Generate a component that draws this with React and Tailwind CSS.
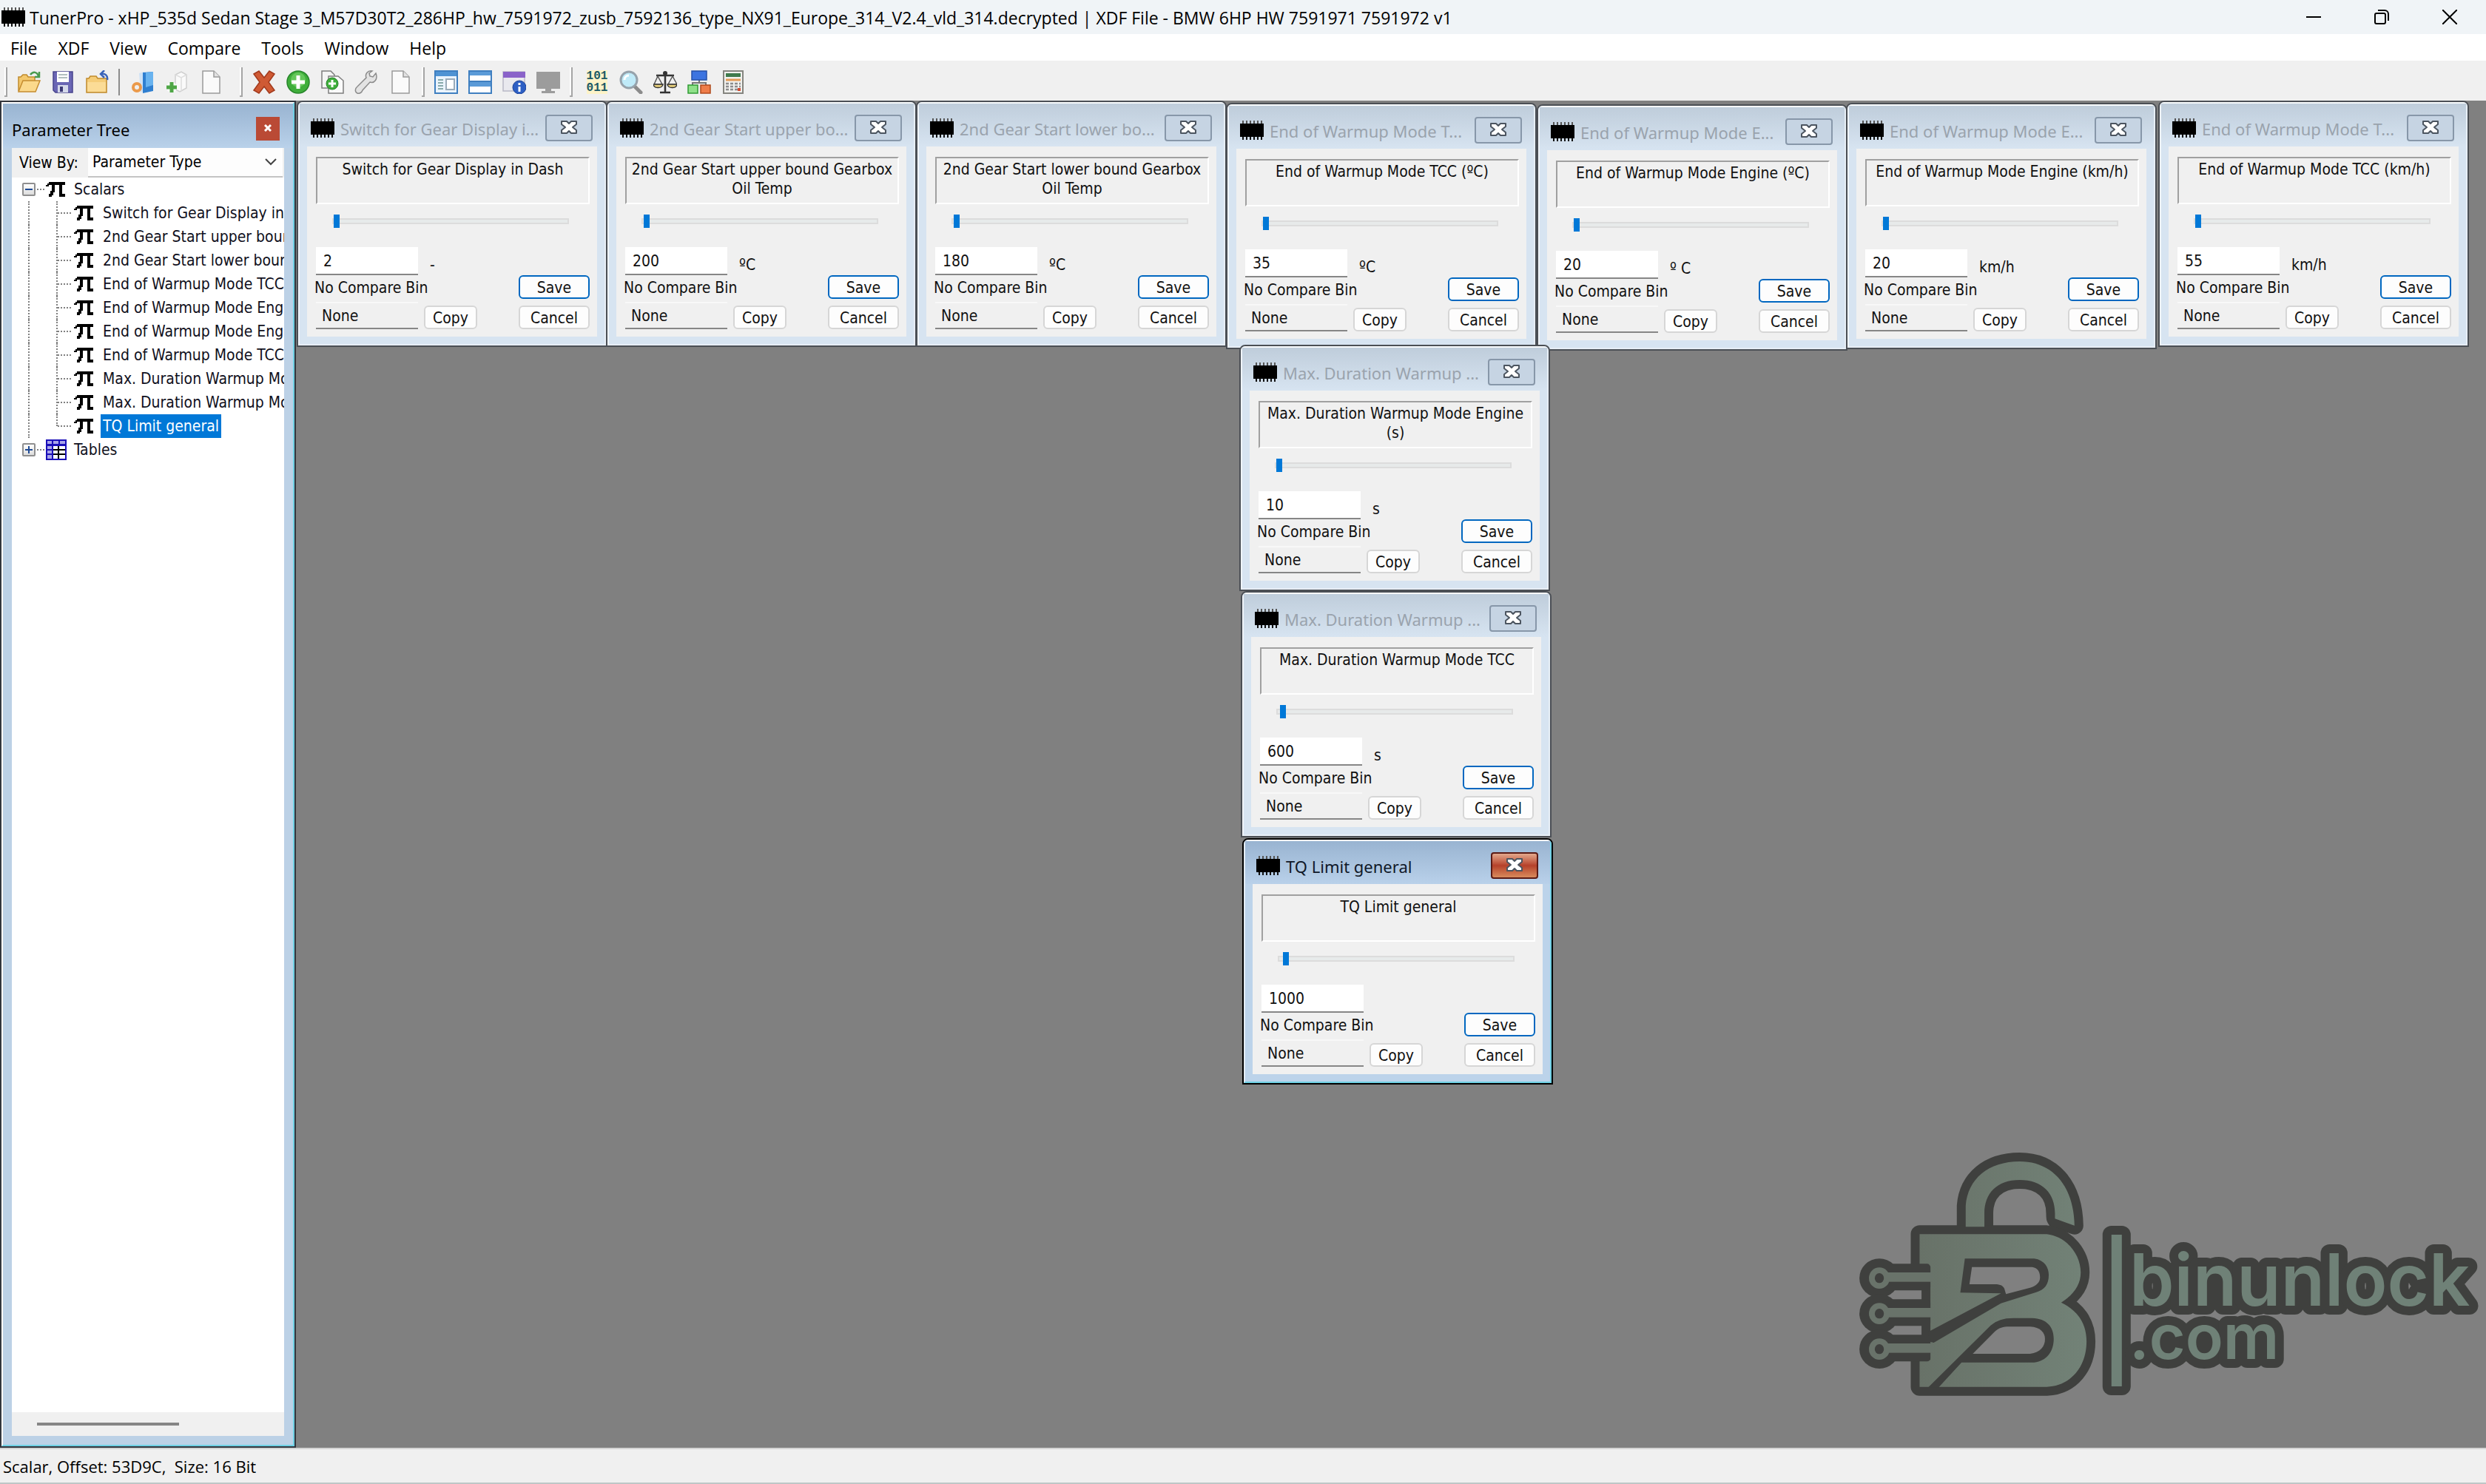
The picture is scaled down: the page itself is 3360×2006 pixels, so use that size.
import React from "react";

const SCALARS = [
  "Switch for Gear Display in Dash",
  "2nd Gear Start upper bound Gearbox Oil Temp",
  "2nd Gear Start lower bound Gearbox Oil Temp",
  "End of Warmup Mode TCC (ºC)",
  "End of Warmup Mode Engine (ºC)",
  "End of Warmup Mode Engine (km/h)",
  "End of Warmup Mode TCC (km/h)",
  "Max. Duration Warmup Mode Engine (s)",
  "Max. Duration Warmup Mode TCC",
  "TQ Limit general",
];

const WINDOWS = [
  { id: "w1", x: 1, y: 0, title: "Switch for Gear Display i...", name: SCALARS[0], value: 2, unit: "-" },
  { id: "w2", x: 419, y: 0, title: "2nd Gear Start upper bo...", name: SCALARS[1], value: 200, unit: "ºC" },
  { id: "w3", x: 838, y: 0, title: "2nd Gear Start lower bo...", name: SCALARS[2], value: 180, unit: "ºC" },
  { id: "w4", x: 1257, y: 3, title: "End of Warmup Mode T...", name: SCALARS[3], value: 35, unit: "ºC" },
  { id: "w5", x: 1677, y: 5, title: "End of Warmup Mode E...", name: SCALARS[4], value: 20, unit: "º C" },
  { id: "w6", x: 2095, y: 3, title: "End of Warmup Mode E...", name: SCALARS[5], value: 20, unit: "km/h" },
  { id: "w7", x: 2517, y: 0, title: "End of Warmup Mode T...", name: SCALARS[6], value: 55, unit: "km/h" },
  { id: "w8", x: 1275, y: 330, title: "Max. Duration Warmup ...", name: SCALARS[7], value: 10, unit: "s" },
  { id: "w9", x: 1277, y: 663, title: "Max. Duration Warmup ...", name: SCALARS[8], value: 600, unit: "s" },
  { id: "w10", x: 1279, y: 997, title: "TQ Limit general", name: SCALARS[9], value: 1000, unit: "", active: true },
];

const MENUS = ["File", "XDF", "View", "Compare", "Tools", "Window", "Help"];

function Chip() {
  return (
    <svg viewBox="0 0 32 26" className="h-[26px] w-8 shrink-0" aria-hidden="true">
      <path d="M4 0v5M9 0v5M14 0v5M19 0v5M24 0v5M29 0v5" stroke="#555" strokeWidth="2" />
      <path d="M4 21v5M9 21v5M14 21v5M19 21v5M24 21v5M29 21v5" stroke="#111" strokeWidth="2" />
      <rect x="0" y="4" width="32" height="18" fill="#000" />
    </svg>
  );
}

function PiIcon() {
  return (
    <svg viewBox="0 0 26 24" className="h-6 w-[26px] shrink-0" aria-hidden="true">
      <path d="M0 6h2V4h2V2h22v4h-4v12h4v4h-8V6h-6v10h-2v4h-2v2H4v-4h2v-4h2V6H4v2H0z" fill="#000" />
    </svg>
  );
}

function TableIcon() {
  return (
    <svg viewBox="0 0 28 28" className="h-7 w-7 shrink-0" aria-hidden="true">
      <rect width="28" height="28" fill="#1a0fb8" />
      <path d="M2 2h6v4H2zM10 2h7v4h-7zM19 2h7v4h-7zM2 9h6v4H2zM2 15h6v4H2zM2 21h6v5H2z" fill="#a9a4ea" />
      <path d="M10 9h16v17H10z" fill="#fff" />
      <path d="M17 9v17M10 14h16M10 20h16" stroke="#000" strokeWidth="2" />
    </svg>
  );
}

function XGlyph() {
  return (
    <svg viewBox="0 0 24 20" className="h-5 w-6" aria-hidden="true">
      <path
        d="M2 2h7l3 3 3-3h7v4l-5 4 5 4v4h-7l-3-3-3 3H2v-4l5-4-5-4z"
        fill="#fff"
        stroke="#4c5560"
        strokeWidth="2"
        strokeLinejoin="round"
      />
    </svg>
  );
}

const ICONS = {
  open: (
    <>
      <path d="M2 28V9h3l3-3h5l2 3h9v5" fill="#f3c86d" stroke="#c08a2c" strokeWidth="1.5" />
      <path d="M2 29l6-15h23l-6 15z" fill="#fbd98c" stroke="#c58c2f" strokeWidth="1.5" />
      <path d="M18 6c4-5 9-4 11 2M30 2v7h-6" fill="none" stroke="#4a9a4e" strokeWidth="2.5" />
    </>
  ),
  save: (
    <>
      <path d="M3 2h26v28H6l-3-3z" fill="#6a66b4" stroke="#47438c" strokeWidth="1.5" />
      <path d="M8 2h16v14H8z" fill="#fff" />
      <path d="M10 6h12M10 10h12" stroke="#9aa" strokeWidth="1.5" />
      <path d="M9 20h14v10H9z" fill="#d5d9ea" />
      <path d="M12 22h4v7h-4z" fill="#3b3974" />
    </>
  ),
  folderBack: (
    <>
      <path d="M2 30V11h3l2-3h8l2 3h12v19z" fill="#f5cd78" stroke="#c08a2c" strokeWidth="1.5" />
      <path d="M3 16h25v13H3z" fill="#fbdc96" />
      <path d="M30 13c1-6-3-9-8-8M26 0l-5 5 5 5" fill="none" stroke="#3a63b8" strokeWidth="2.5" />
    </>
  ),
  bin: (
    <>
      <path d="M11 4l7-2v26l-5 2z" fill="#cfe2f6" />
      <path d="M16 3l14-1v26l-14 3z" fill="#2f7fd0" />
      <path d="M20 3l10-1v18l-10 3z" fill="#69b3ef" />
      <circle cx="8" cy="23" r="5" fill="none" stroke="#eb9a4b" strokeWidth="4" />
    </>
  ),
  binAdd: (
    <>
      <path d="M14 6l8-4 7 4v18l-9 5-6-3z" fill="#fafafa" stroke="#cfcfcf" strokeWidth="1.5" />
      <path d="M14 6l8 4 7-4M22 10v18" fill="none" stroke="#dedede" strokeWidth="1.5" />
      <circle cx="9" cy="23" r="7" fill="#fff" />
      <path d="M9 16v14M2 23h14" stroke="#4fa646" strokeWidth="5" />
    </>
  ),
  page: (
    <>
      <path d="M5 1h15l8 8v22H5z" fill="#fafafa" stroke="#9a9a9a" strokeWidth="1.5" />
      <path d="M20 1v8h8" fill="#e2e2e2" stroke="#9a9a9a" strokeWidth="1.5" />
    </>
  ),
  cross: (
    <path d="M2 5l7-4 7 9 7-9 7 4-8 11 8 11-7 4-7-9-7 9-7-4 8-11z" fill="#cf5a34" stroke="#a23a1d" strokeWidth="1.5" />
  ),
  add: (
    <>
      <circle cx="16" cy="16" r="15" fill="#3fae3b" stroke="#27852a" strokeWidth="1.5" />
      <circle cx="16" cy="13" r="10" fill="#64c75a" />
      <path d="M16 7v18M7 16h18" stroke="#fff" strokeWidth="5" />
    </>
  ),
  copyAdd: (
    <>
      <path d="M2 1h12l5 5v18H2z" fill="#f4f4f4" stroke="#7d7d7d" strokeWidth="1.5" />
      <path d="M11 8h13l7 6v17H11z" fill="#fafafa" stroke="#7d7d7d" strokeWidth="1.5" />
      <circle cx="16" cy="18" r="8" fill="#3fae3b" stroke="#27852a" />
      <path d="M16 13v10M11 18h10" stroke="#fff" strokeWidth="3" />
    </>
  ),
  wrench: (
    <path
      d="M29 4l-4 5-4-1-1-4 4-3c-6-1-10 4-8 9L4 22c-4 3-3 8 0 9s6-1 7-4l10-11c6 2 11-4 8-12z"
      fill="#e3e3e3"
      stroke="#8b8b8b"
      strokeWidth="1.5"
    />
  ),
  layout: (
    <>
      <rect x="1" y="1" width="30" height="30" fill="#eaf3fc" stroke="#3f7fc0" strokeWidth="2" />
      <path d="M2 2h28v6H2z" fill="#4f93d3" />
      <path d="M5 13h7M5 17h7M5 21h7M5 25h7" stroke="#8aa" strokeWidth="2" />
      <rect x="16" y="12" width="11" height="14" fill="#fff" stroke="#9aabb9" strokeWidth="2" />
    </>
  ),
  tile: (
    <>
      <rect x="1" y="1" width="30" height="30" fill="#fff" stroke="#3f7fc0" strokeWidth="2" />
      <path d="M2 2h28v5H2zM2 16h28v6H2z" fill="#5b9bd8" />
      <path d="M2 15h28" stroke="#3f7fc0" strokeWidth="2" />
    </>
  ),
  info: (
    <>
      <rect x="1" y="2" width="29" height="26" fill="#e9e9ee" stroke="#b9b9c6" strokeWidth="1.5" />
      <path d="M1 2h30v8H1z" fill="#8a63c9" />
      <circle cx="23" cy="23" r="9" fill="#2d5fc4" stroke="#1c4296" />
      <path d="M23 17v3M23 22v7" stroke="#fff" strokeWidth="3" />
    </>
  ),
  monitor: <path d="M0 2h32v23H20v3h5v3H7v-3h5v-3H0z" fill="#9c9c9c" />,
  zoom: (
    <>
      <path d="M20 21l9 9" stroke="#8b8b8b" strokeWidth="5" strokeLinecap="round" />
      <circle cx="13" cy="13" r="11" fill="#bfeaf8" stroke="#96a2ab" strokeWidth="3" />
      <path d="M7 13c0-4 3-6 6-6" fill="none" stroke="#fff" strokeWidth="3" />
    </>
  ),
  scales: (
    <>
      <path d="M16 3v26M9 30h14M4 7h24" stroke="#333" strokeWidth="2.5" />
      <circle cx="16" cy="4" r="3" fill="#333" />
      <path d="M6 8L1 19h11zM26 8l-6 11h12z" fill="none" stroke="#555" strokeWidth="1.5" />
      <path d="M0 19h13c-1 6-12 6-13 0zM19 19h13c-1 6-12 6-13 0z" fill="#e6cf7c" stroke="#333" strokeWidth="1.5" />
    </>
  ),
  nodes: (
    <>
      <path d="M16 12v6M7 21v-4h18v4" fill="none" stroke="#777" strokeWidth="2" />
      <rect x="6" y="1" width="20" height="12" fill="#3c74e0" stroke="#2450a8" strokeWidth="1.5" />
      <rect x="1" y="20" width="13" height="11" fill="#8fe089" stroke="#2f9a33" strokeWidth="1.5" />
      <rect x="18" y="20" width="13" height="11" fill="#ef7d49" stroke="#b04a1c" strokeWidth="1.5" />
    </>
  ),
  calc: (
    <>
      <rect x="3" y="1" width="26" height="30" fill="#f1f1ee" stroke="#85857f" strokeWidth="2" />
      <rect x="6" y="4" width="20" height="5" fill="#3f7a4c" />
      <path d="M6 13h20" stroke="#e39a55" strokeWidth="3" />
      <path d="M6 18h20M6 22h20M6 26h20" stroke="#8d8d8d" strokeWidth="2.5" strokeDasharray="4 2" />
      <path d="M22 24h4v4h-4z" fill="#d24b32" />
    </>
  ),
};

function ToolButton({ icon, label }) {
  return (
    <button type="button" aria-label={label} className="flex h-10 w-[46px] items-center justify-center">
      {icon === "binary" ? (
        <span className="bg-[#fdf3c8] font-['Liberation_Mono'] text-base leading-4 font-bold text-[#1c5a66]">
          101
          <br />
          011
        </span>
      ) : (
        <svg viewBox="0 0 32 32" className="h-8 w-8" aria-hidden="true">
          {ICONS[icon]}
        </svg>
      )}
    </button>
  );
}

function Grip() {
  return <span className="mx-1.5 h-10 w-1 border-r-2 border-b-2 border-[#a5a5a5] bg-white" />;
}

function TitleBar() {
  const caption = "flex h-full w-[92px] items-center justify-center";
  return (
    <header className="flex h-[46px] items-center bg-[#f0f4f7] pr-[3px] pl-0.5">
      <Chip />
      <h1 className="ml-1.5 flex-1 truncate pt-0.5 font-['Open_Sans',sans-serif] text-[23px] whitespace-nowrap text-black">
        TunerPro - xHP_535d Sedan Stage 3_M57D30T2_286HP_hw_7591972_zusb_7592136_type_NX91_Europe_314_V2.4_vld_314.decrypted | XDF File - BMW 6HP HW 7591971 7591972 v1
      </h1>
      <button type="button" aria-label="Minimize" className={caption}>
        <svg viewBox="0 0 20 20" className="h-5 w-5"><path d="M0 10h20" stroke="#000" strokeWidth="2" /></svg>
      </button>
      <button type="button" aria-label="Restore" className={caption}>
        <svg viewBox="0 0 20 20" className="h-5 w-5" fill="none" stroke="#000" strokeWidth="2">
          <rect x="1" y="5" width="14" height="14" rx="2" />
          <path d="M5 1h9a5 5 0 0 1 5 5v9" />
        </svg>
      </button>
      <button type="button" aria-label="Close" className={caption}>
        <svg viewBox="0 0 20 20" className="h-5 w-5"><path d="M0 0l20 20M20 0L0 20" stroke="#000" strokeWidth="2" /></svg>
      </button>
    </header>
  );
}

function MenuBar() {
  return (
    <nav className="flex h-9 items-center bg-white">
      {MENUS.map((m) => (
        <button key={m} type="button" className="px-3.5 pt-0.5 font-['Open_Sans',sans-serif] text-[23px] leading-8 text-black">
          {m}
        </button>
      ))}
    </nav>
  );
}

function ToolBar() {
  return (
    <div role="toolbar" aria-label="Main toolbar" className="flex h-[54px] items-center bg-[#f0f0f0] pt-1">
      <Grip />
      <ToolButton icon="open" label="Open bin" />
      <ToolButton icon="save" label="Save bin" />
      <ToolButton icon="folderBack" label="Close bin" />
      <span className="mr-2 ml-1.5 h-9 w-0.5 bg-[#8c8c8c]" />
      <ToolButton icon="bin" label="Select definition" />
      <ToolButton icon="binAdd" label="Add definition" />
      <ToolButton icon="page" label="New definition" />
      <span className="w-2.5" />
      <Grip />
      <ToolButton icon="cross" label="Delete" />
      <ToolButton icon="add" label="Add" />
      <ToolButton icon="copyAdd" label="Duplicate" />
      <ToolButton icon="wrench" label="Edit" />
      <ToolButton icon="page" label="New" />
      <Grip />
      <ToolButton icon="layout" label="Parameter tree" />
      <ToolButton icon="tile" label="Tile" />
      <ToolButton icon="info" label="Window info" />
      <ToolButton icon="monitor" label="Emulator" />
      <Grip />
      <span className="w-1" />
      <ToolButton icon="binary" label="Hex editor" />
      <ToolButton icon="zoom" label="Find" />
      <ToolButton icon="scales" label="Compare" />
      <ToolButton icon="nodes" label="Difference" />
      <ToolButton icon="calc" label="Calculator" />
    </div>
  );
}

function Expander({ open, label }) {
  return (
    <button
      type="button"
      aria-label={label}
      className="flex h-[18px] w-[18px] shrink-0 items-center justify-center rounded-xs border-2 border-[#8f8f8f] bg-gradient-to-b from-white to-[#dcdcdc]"
    >
      <svg viewBox="0 0 10 10" className="h-2.5 w-2.5">
        <path d={open ? "M0 5h10" : "M0 5h10M5 0v10"} stroke="#1f4a94" strokeWidth="2" />
      </svg>
    </button>
  );
}

function ParameterTree() {
  return (
    <aside className="flex w-[400px] shrink-0 flex-col border-2 border-[#33363d] bg-[#bcd1e6]">
      <div className="flex flex-1 flex-col border-t-2 border-r-2 border-b-2 border-l-2 border-t-white border-r-[#6fd0e4] border-b-[#6fd0e4] border-l-white px-3 pb-3">
        <div className="-mx-3 flex h-[60px] items-center justify-between bg-gradient-to-b from-[#99b4d1] to-[#b9d1ea] pt-2 pr-[18px] pl-3">
          <h2 className="pt-0.5 font-['Noto_Sans',sans-serif] text-[22px] text-black">Parameter Tree</h2>
          <button
            type="button"
            aria-label="Close parameter tree"
            className="flex h-8 w-8 items-center justify-center bg-[#ba4a35] pb-0.5"
          >
            <svg viewBox="0 0 10 10" className="h-2.5 w-2.5"><path d="M1 1l8 8M9 1L1 9" stroke="#fff" strokeWidth="3" /></svg>
          </button>
        </div>
        <div className="flex h-10 bg-[#f0f0f0] pr-0.5">
          <label htmlFor="viewby" className="w-[103px] pl-2.5 text-[21px] leading-10">View By:</label>
          <div className="flex flex-1 items-center border-b-2 border-[#c4c4c4] bg-[#fdfdfd] pr-2">
            <select id="viewby" className="h-full flex-1 appearance-none pt-0.5 pl-1.5 text-[21px] outline-none">
              <option>Parameter Type</option>
            </select>
            <svg viewBox="0 0 16 10" className="h-2.5 w-4" aria-hidden="true">
              <path d="M1 1l7 7 7-7" fill="none" stroke="#444" strokeWidth="2" />
            </svg>
          </div>
        </div>
        <ul className="flex-1 overflow-hidden bg-white text-[21px] leading-8 whitespace-nowrap text-[#101020]">
          <li>
            <div className="flex h-8 items-center pl-3.5">
              <Expander open label="Collapse Scalars" />
              <span className="mx-0.5 w-2.5 border-t-2 border-dotted border-[#808080]" />
              <PiIcon />
              <span className="ml-2.5 px-0.5">Scalars</span>
            </div>
            <ul>
              {SCALARS.map((s, i) => {
                const last = i === SCALARS.length - 1;
                return (
                  <li key={s} className="flex h-8 items-center pl-[22px]">
                    <span className="h-8 w-[38px] shrink-0 border-l-2 border-dotted border-[#808080]" />
                    <span className={last ? "h-4 w-0 shrink-0 self-start border-l-2 border-dotted border-[#808080]" : "h-8 w-0 shrink-0 border-l-2 border-dotted border-[#808080]"} />
                    <span className="mr-1 w-[18px] shrink-0 border-t-2 border-dotted border-[#808080]" />
                    <PiIcon />
                    <span className={last ? "ml-2.5 bg-[#0078d7] px-[3px] text-white" : "ml-2.5 px-[3px]"}>{s}</span>
                  </li>
                );
              })}
            </ul>
          </li>
          <li className="flex h-8 items-center pl-3.5">
            <Expander label="Expand Tables" />
            <span className="mx-0.5 w-2.5 border-t-2 border-dotted border-[#808080]" />
            <TableIcon />
            <span className="ml-2 px-0.5">Tables</span>
          </li>
        </ul>
        <div className="flex h-8 items-center bg-[#f0f0f0] pl-[34px]">
          <span className="h-1 w-48 bg-[#868686]" />
        </div>
      </div>
    </aside>
  );
}

function ParamWindow({ id, x, y, title, name, value, unit, active }) {
  return (
    <section
      aria-label={name}
      style={{ left: x, top: y }}
      className={
        "absolute flex w-[420px] flex-col overflow-hidden rounded-t-lg border-2 " +
        (active ? "border-black bg-[#bcd3ea]" : "border-[#4b4f55] bg-[#d7e4f1]")
      }
    >
      <div
        className={
          "flex flex-col border-2 border-t-white/80 border-l-white/60 " +
          (active ? "border-r-[#6fd0e4] border-b-[#6fd0e4]" : "border-r-white/40 border-b-white/40")
        }
      >
        <div
          className={
            "flex h-[58px] items-center bg-gradient-to-b pt-2 pr-4 pl-[15px] " +
            (active ? "from-[#99b4d1] to-[#b9d1ea]" : "from-[#bfcddb] to-[#d7e4f1]")
          }
        >
          <Chip />
          <h2
            className={
              "ml-2 flex-1 pt-0.5 font-['Noto_Sans',sans-serif] text-[22px] whitespace-nowrap " +
              (active ? "text-[#101828]" : "text-[#9aa3ad]")
            }
          >
            {title}
          </h2>
          <button
            type="button"
            aria-label={"Close " + name}
            className={
              "flex h-9 w-16 shrink-0 items-center justify-center rounded-[4px] border-2 pb-0.5 " +
              (active
                ? "border-[#5b1a14] bg-gradient-to-b from-[#e3a88c] via-[#b5402a] to-[#d88a5c]"
                : "border-[#8797a9] bg-[#c6d4e3]")
            }
          >
            <XGlyph />
          </button>
        </div>
        <div className="mx-2.5 mb-2.5 bg-[#f0f0f0] pt-3.5 pr-2.5 pb-2.5 pl-3 text-[21px] text-[#101010]">
          <p className="h-16 border-2 border-t-[#a0a0a0] border-r-white border-b-white border-l-[#a0a0a0] px-0.5 pt-0.5 text-center leading-[26px]">
            {name}
          </p>
          <input
            type="range"
            aria-label={name}
            min="0"
            max="65535"
            defaultValue={value}
            className="mt-3.5 mr-6 mb-[26px] ml-[22px] block h-[18px] w-80 appearance-none bg-transparent [&::-webkit-slider-runnable-track]:h-2 [&::-webkit-slider-runnable-track]:border-2 [&::-webkit-slider-runnable-track]:border-[#dcdcdc] [&::-webkit-slider-runnable-track]:bg-[#e7eaea] [&::-webkit-slider-thumb]:-mt-[7px] [&::-webkit-slider-thumb]:h-[18px] [&::-webkit-slider-thumb]:w-2 [&::-webkit-slider-thumb]:appearance-none [&::-webkit-slider-thumb]:bg-[#0078d7]"
          />
          <div className="flex h-[38px] items-end">
            <input
              id={id}
              aria-label={name + " value"}
              defaultValue={value}
              className="h-full w-[138px] border-b-2 border-[#868686] bg-white pt-0.5 pl-2.5 outline-none"
            />
            <span className="ml-4 leading-7">{unit}</span>
          </div>
          <div className="flex h-8 items-center justify-between">
            <label htmlFor={id + "c"} className="-ml-0.5 pt-0.5 leading-8">No Compare Bin</label>
            <button type="button" className="h-8 w-24 rounded-md border-2 border-[#0067c0] bg-[#fdfdfd] pt-0.5 leading-6">
              Save
            </button>
          </div>
          <div className="mt-1 flex h-[37px] items-end">
            <input
              id={id + "c"}
              readOnly
              defaultValue="None"
              className="h-full w-[138px] border-t-2 border-b-2 border-t-[#f8f8f8] border-b-[#868686] pl-2 outline-none"
            />
            <button type="button" className="ml-2 h-8 w-[72px] rounded-md border-2 border-[#d6d6d6] bg-[#fdfdfd] pt-0.5 leading-6">
              Copy
            </button>
            <button type="button" className="ml-auto h-8 w-24 rounded-md border-2 border-[#d6d6d6] bg-[#fdfdfd] pt-0.5 leading-6">
              Cancel
            </button>
          </div>
        </div>
      </div>
    </section>
  );
}

const SHACKLE =
  "M315 385V300C320 190 370 120 445 120C520 120 575 210 577 380L530 352V330C530 250 500 195 445 195C390 195 360 250 360 330V385Z";
const BODY =
  "M204 415H510C560 425 592 500 592 570C592 620 575 660 545 692C580 720 606 770 606 850C606 950 570 1030 510 1034H204V925H230V545H204Z";

function Watermark() {
  const pins = [588, 732, 876];
  return (
    <svg viewBox="0 0 880 400" className="absolute right-0 bottom-[27px] h-[400px] w-[880px]" role="img" aria-label="binunlock.com">
      <defs>
        <linearGradient id="lg" gradientUnits="userSpaceOnUse" x1="204" x2="606" y1="0" y2="0">
          <stop offset="0" stopColor="#687268" />
          <stop offset="1" stopColor="#728277" />
        </linearGradient>
      </defs>
      <g transform="scale(0.5612 0.33333)">
        <g fill="#3f403e" stroke="#3f403e" strokeWidth="24" strokeLinejoin="round">
          <path d={SHACKLE} vectorEffect="non-scaling-stroke" />
          <path d={BODY} vectorEffect="non-scaling-stroke" />
          <rect x="666" y="417" width="25" height="615" vectorEffect="non-scaling-stroke" />
        </g>
        <path d="M382 378V330C384 270 410 232 445 232C480 232 508 270 508 330C508 350 510 365 516 378Z" fill="#808080" />
        <path d={SHACKLE} fill="url(#lg)" />
        <path d={BODY} fill="url(#lg)" />
        <rect x="666" y="417" width="25" height="615" fill="#6f8177" />
        <path d="M313 514H480C505 520 515 550 515 580C515 620 505 640 485 650L400 695L238 855L226 850V810L400 655L302 652Z" fill="#3f403e" />
        <path d="M330 548H475C490 552 494 570 494 590C494 610 485 625 470 632L412 658L408 635C405 625 400 618 385 618H324Z" fill="#808080" />
        <path d="M225 1036L375 785C390 765 405 755 430 755H475C510 757 527 790 527 840C527 890 510 930 480 935H305L250 1036Z" fill="#3f403e" />
        <path d="M332 900L385 810C395 795 405 790 420 790H470C495 792 506 815 506 840C506 870 495 895 470 900Z" fill="#808080" />
        {pins.map((y) => (
          <g key={y} fill="#3f403e">
            <ellipse cx="107" cy={y + 5} rx="48" ry="79" />
            <rect x="115" y={y - 53} width="115" height="108" rx="8" ry="14" />
          </g>
        ))}
        {pins.map((y) => (
          <g key={y}>
            <ellipse cx="107" cy={y + 5} rx="25" ry="43" fill="#69736a" />
            <rect x="120" y={y - 18} width="116" height="38" fill="#69736a" />
            <ellipse cx="107" cy={y + 5} rx="11" ry="20" fill="#3f403e" />
          </g>
        ))}
      </g>
      <g fontFamily="Inter, sans-serif" fontWeight="600" stroke="#3f403e" strokeWidth="24" strokeLinejoin="round" fill="#6f8177" paintOrder="stroke">
        <text x="398" y="235" fontSize="97">binunlock</text>
        <text x="398" y="307" fontSize="84">.com</text>
      </g>
    </svg>
  );
}

export default function App() {
  return (
    <div className="flex h-screen flex-col overflow-hidden bg-[#f0f0f0] font-['DejaVu_Sans_Condensed',sans-serif] text-[21px] text-black">
      <TitleBar />
      <MenuBar />
      <ToolBar />
      <main className="flex min-h-0 flex-1 bg-[#808080]">
        <ParameterTree />
        <div className="relative flex-1 overflow-hidden">
          <Watermark />
          {WINDOWS.map((w) => (
            <ParamWindow key={w.id} {...w} />
          ))}
        </div>
      </main>
      <footer className="flex h-[49px] items-center border-t-2 border-b-2 border-t-[#d4d4d4] border-b-[#bfc6c6] bg-[#f0f0f0] pt-0.5 pl-1 font-['Open_Sans',sans-serif] text-[22px] whitespace-pre">
        {"Scalar, Offset: 53D9C,  Size: 16 Bit"}
      </footer>
    </div>
  );
}
